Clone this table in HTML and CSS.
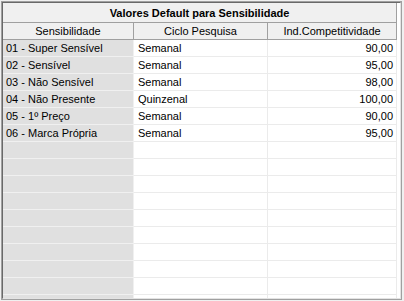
FILE: index.html
```html
<!DOCTYPE html>
<html>
<head>
<meta charset="utf-8">
<link rel="stylesheet" href="styles.css">
</head>
<body>
<div class="frame">
  <div class="inner">
    <table class="grid">
      <colgroup><col class="c1"><col class="c2"><col class="c3"></colgroup>
      <thead>
        <tr class="title"><th colspan="3">Valores Default para Sensibilidade</th></tr>
        <tr class="head"><th>Sensibilidade</th><th>Ciclo Pesquisa</th><th>Ind.Competitividade</th></tr>
      </thead>
      <tbody>
        <tr><td class="fix">01 - Super Sensível</td><td>Semanal</td><td class="num">90,00</td></tr>
        <tr><td class="fix">02 - Sensível</td><td>Semanal</td><td class="num">95,00</td></tr>
        <tr><td class="fix">03 - Não Sensível</td><td>Semanal</td><td class="num">98,00</td></tr>
        <tr><td class="fix">04 - Não Presente</td><td>Quinzenal</td><td class="num">100,00</td></tr>
        <tr><td class="fix">05 - 1º Preço</td><td>Semanal</td><td class="num">90,00</td></tr>
        <tr><td class="fix">06 - Marca Própria</td><td>Semanal</td><td class="num">95,00</td></tr>
        <tr><td class="fix"></td><td></td><td class="num"></td></tr>
        <tr><td class="fix"></td><td></td><td class="num"></td></tr>
        <tr><td class="fix"></td><td></td><td class="num"></td></tr>
        <tr><td class="fix"></td><td></td><td class="num"></td></tr>
        <tr><td class="fix"></td><td></td><td class="num"></td></tr>
        <tr><td class="fix"></td><td></td><td class="num"></td></tr>
        <tr><td class="fix"></td><td></td><td class="num"></td></tr>
        <tr><td class="fix"></td><td></td><td class="num"></td></tr>
        <tr><td class="fix"></td><td></td><td class="num"></td></tr>
        <tr><td class="fix"></td><td></td><td class="num"></td></tr>
      </tbody>
    </table>
  </div>
</div>
</body>
</html>
```
FILE: styles.css
```css
html, body {
  margin: 0;
  padding: 0;
}
body {
  width: 404px;
  height: 301px;
  overflow: hidden;
  background: #f0f0f0;
  font-family: "Liberation Sans", Arial, sans-serif;
  font-size: 11px;
  color: #000;
}
.frame {
  margin: 1px 0 0 1px;
  width: 401px;
  height: 299px;
  box-sizing: border-box;
  border: 1px solid #a0a0a0;
  background: #fff;
}
.inner {
  width: 399px;
  height: 297px;
  box-sizing: border-box;
  border-top: 1px solid #696969;
  border-left: 1px solid #696969;
  border-right: 1px solid #e3e3e3;
  border-bottom: 1px solid #e3e3e3;
  overflow: hidden;
  background: #fff;
}
.grid {
  table-layout: fixed;
  border-collapse: separate;
  border-spacing: 0;
  width: 394px;
}
.c1 { width: 131px; }
.c2 { width: 134px; }
.c3 { width: 129px; }
.grid th, .grid td {
  padding: 0 4px;
  white-space: nowrap;
  overflow: hidden;
  box-sizing: border-box;
}
.title th {
  height: 20px;
  background: #f0f0f0;
  border-bottom: 1px solid #a0a0a0;
  border-right: 1px solid #a0a0a0;
  font-weight: bold;
  font-size: 11px;
  text-align: center;
  padding-top: 1px;
}
.head th {
  height: 17px;
  background: #f0f0f0;
  border-bottom: 1px solid #a0a0a0;
  border-right: 1px solid #a0a0a0;
  font-weight: normal;
  text-align: center;
}
.grid td {
  height: 17px;
  border-bottom: 1px solid #ebebeb;
  border-right: 1px solid #ebebeb;
  text-align: left;
}
.grid td.fix {
  padding-left: 3px;
  background: #e0e0e0;
  border-bottom-color: #f0f0f0;
  border-right-color: #f0f0f0;
}
.grid td.num {
  text-align: right;
  padding-right: 3px;
}
```
